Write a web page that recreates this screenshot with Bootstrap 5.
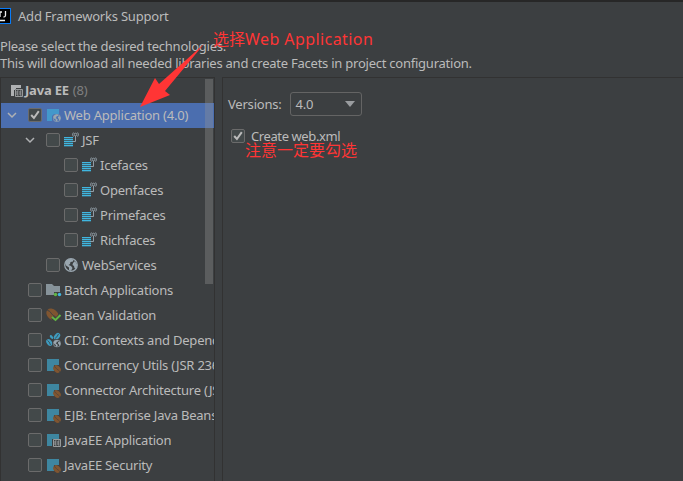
<!DOCTYPE html>
<html lang="en">
<head>
<meta charset="utf-8">
<title>Add Frameworks Support</title>
<link href="https://cdn.jsdelivr.net/npm/bootstrap@5.3.0/dist/css/bootstrap.min.css" rel="stylesheet">
<style>
body{width:683px;height:481px;background:#3c3f41;color:#bbb;font:13px/17px "Noto Sans","Noto Sans CJK SC",sans-serif;letter-spacing:-.21px}
.dialog{height:481px;border-top:2px solid #272727}
.titlebar{height:29px;padding-left:18px}
.logo{left:-5px;top:6px;width:16px;height:16px;background:#000;border:1px solid #087cfa}
.intro{height:46px;padding-top:7px;letter-spacing:-.24px}
.tree{width:215px;border:1px solid #323232;border-bottom:0}
.tree-row{height:25px;padding-left:27px}
.tree-row svg,.opt svg{flex:none;display:block}
.tree-row.head{padding-left:9px}
.tree-row.sel{background:#4b6eaf}
.tree-row.open{padding-left:6px}
.lv2{padding-left:45px}.lv2.open{padding-left:24px}.lv3{padding-left:63px}
.chev{width:10px;height:10px;margin:0 11px 1px 0;fill:none;stroke:#afb1b3;stroke-width:1.5}
.cb{flex:none;width:14px;height:14px;margin-bottom:1px;border:1px solid #6b6b6b;border-radius:2px;background:#43494a}
.cb svg{width:12px;height:12px;fill:none;stroke:#bbb;stroke-width:2}
.ico{width:16px;height:16px;margin:0 2px 1px 4px}
.tree-row.head .ico{margin:0 -1px 1px 0}
.count{color:#808080}
.thumb{right:1px;top:1px;width:8px;height:205px;background:rgba(150,150,150,.35)}
.detail{border:1px solid #323232;border-right:0;border-bottom:0;margin-left:7px;padding:14px 0 0 5px}
.combo{width:72px;height:24px;border:1px solid #646464;border-radius:3px;padding:0 6px 0 5px;margin-left:8px}
.opt{margin-top:12px;padding-left:3px}
.create{margin-left:6px;letter-spacing:-.4px}
.note{color:#ff3535;font:16px/20px "Noto Sans","Noto Sans CJK SC",sans-serif;white-space:nowrap;letter-spacing:0}
.note-a{left:213px;top:29px}.note-a span{letter-spacing:.42px}.note-b{left:245px;top:140px}
.arrow{left:130px;top:40px}
</style>
<script src="https://cdn.jsdelivr.net/npm/bootstrap@5.3.0/dist/js/bootstrap.bundle.min.js"></script>
</head>
<body class="overflow-hidden position-relative">
<svg width="0" height="0" class="position-absolute">
<symbol id="chev" viewBox="0 0 10 10"><path d="M1 3l4 4 4-4"/></symbol>
<symbol id="tick" viewBox="0 0 12 12"><path d="M2.2 6l2.7 3L9.8 2.2"/></symbol>
<symbol id="bean" viewBox="0 0 8 8"><ellipse cx="4" cy="4" rx="4.2" ry="3.2" transform="rotate(42 4 4)" fill="#805530"/><path d="M.8 1.4C3 2 3.2 3.6 4 4.2S6 5.200 7 7" stroke="#3c3f41" stroke-width=".6" fill="none"/></symbol>
<symbol id="globe" viewBox="0 0 14 14"><circle cx="7" cy="7" r="6.300" fill="none" stroke="#9aa7b0" stroke-width="1.200"/><path d="M1 5L2.500 2.500 6 .8 9.500 1.500 9 3.500 6.500 4 6 6 4.500 7 7 8 8.500 10 7 13 5 12 5 9.500 2 7.500ZM11 3L13.300 7 12 11 10.500 10 10 8 8.500 7 9 5Z" fill="#9aa7b0"/></symbol>
<symbol id="glb" viewBox="0 0 16 16"><use href="#globe" x="0" y="1" width="14" height="14"/></symbol>
<symbol id="jsf" viewBox="0 0 16 16"><path d="M0 5h9v10H0z" fill="#40b6e0" fill-opacity=".3"/><path d="M0 5h9v1H0zM0 7h9v1H0zM0 9h9v1H0zM0 11h9v1H0zM0 13h9v1H0z" fill="#40b6e0"/><path d="M8.500 9.500h3V4M9.400 .5Q7.600 2.500 9.400 4.600M13.600 .5Q15.400 2.500 13.600 4.600" fill="none" stroke="#9aa7b0" stroke-width=".9"/><circle cx="11.500" cy="2.500" r="1.300" fill="none" stroke="#9aa7b0" stroke-width=".9"/></symbol>
<symbol id="mod" viewBox="0 0 16 16"><path d="M1 2h12v6H8v6H1z" fill="#3e86a0"/><use href="#bean" x="7" y="8" width="8" height="8"/></symbol>
<symbol id="web" viewBox="0 0 16 16"><path d="M1 2h12v5H8L6 9v5H1z" fill="#4398cb"/><use href="#globe" x="6.800" y="7" width="8.200" height="8.200"/></symbol>
<symbol id="ee" viewBox="0 0 8 8"><path d="M0 0h8v8H0z" fill="#3c3f41"/><path d="M.5 .5h7v7h-7zM3.600 2H2v4h1.600M2 4h1.500M6.600 2H5v4h1.600M5 4h1.500" fill="none" stroke="#afb1b3" stroke-width=".8"/></symbol>
<symbol id="head" viewBox="0 0 16 16"><path d="M1 3h10v3H6v2H4v6H1z" fill="#afb1b3"/><use href="#ee" x="5" y="7" width="8" height="8"/></symbol>
<symbol id="app" viewBox="0 0 16 16"><path d="M1 2h12v5H6v7H1z" fill="#3e86a0"/><use href="#ee" x="7" y="7" width="8" height="8"/></symbol>
<symbol id="batch" viewBox="0 0 16 16"><path d="M0 2h6l2 2h6v6H8v3H0z" fill="#87939a"/><circle cx="9.500" cy="12.500" r="1.700" fill="#62b543"/><circle cx="13.500" cy="12.500" r="1.700" fill="#40b6e0"/></symbol>
<symbol id="valid" viewBox="0 0 16 16"><use href="#bean" x="0" y="1" width="13" height="13"/><path d="M6.500 10.500l3 3L14.500 8" fill="none" stroke="#3c3f41" stroke-width="4"/><path d="M6 10l3.500 3L14.500 8" fill="none" stroke="#62b543" stroke-width="2"/></symbol>
<symbol id="cdi" viewBox="0 0 16 16"><g fill="#3e9cc0"><ellipse cx="11" cy="4.300" rx="2.600" ry="3.800" transform="rotate(40 11 4.300)"/><ellipse cx="3.300" cy="10.500" rx="2.600" ry="3.800" transform="rotate(-35 3.300 10.500)"/><ellipse cx="5.500" cy="5" rx="1.300" ry="2.200" transform="rotate(-40 5.500 5)"/></g><path d="M9 6.500q2-1 3.500-4.500M1.500 8.500q2 1 3 4.500" stroke="#3c3f41" stroke-width=".8" fill="none"/><circle cx="11" cy="11.500" r="4.500" fill="#3c3f41"/><use href="#globe" x="7" y="7.500" width="8" height="8"/></symbol>
</svg>
<div class="dialog d-flex flex-column">
<div class="titlebar d-flex align-items-center position-relative"><svg class="logo position-absolute" viewBox="0 0 14 14"><path d="M2 3h4M4 3v5M9.500 2v4.500q0 1.500-2 1.500M4 11.500h5" fill="none" stroke="#eee" stroke-width="1.300"/></svg>Add Frameworks Support</div>
<div class="intro text-nowrap">Please select the desired technologies.<br>This will download all needed libraries and create Facets in project configuration.</div>
<div class="d-flex flex-fill">
<div class="tree position-relative overflow-hidden text-nowrap" id="tree">
<div class="tree-row head d-flex align-items-center"><svg class="ico"><use href="#head"/></svg><b>Java EE</b><span class="count ms-1">(8)</span></div>
<div class="thumb position-absolute"></div>
</div>
<div class="detail flex-fill">
<div class="d-flex align-items-center">Versions:<div class="combo d-flex align-items-center justify-content-between">4.0<svg width="10" height="6"><path d="M0 0h10L5 6z" fill="#9a9da0"/></svg></div></div>
<div class="opt d-flex align-items-center"><span class="cb"><svg><use href="#tick"/></svg></span><span class="create">Create web.xml</span></div>
</div>
</div>
</div>
<svg class="arrow position-absolute" width="75" height="68"><path d="M74 4L35 51 40 55 10 67 25 38 29 44Z" fill="#ff3535"/></svg>
<div class="note note-a position-absolute">选择<span>Web Application</span></div>
<div class="note note-b position-absolute">注意一定要勾选</div>
<script>
const rows=[['Web Application (4.0)','web','sel open',1],['JSF','jsf','lv2 open'],['Icefaces','jsf','lv3'],['Openfaces','jsf','lv3'],['Primefaces','jsf','lv3'],['Richfaces','jsf','lv3'],['WebServices','glb','lv2'],['Batch Applications','batch',''],['Bean Validation','valid',''],['CDI: Contexts and Dependency Injection','cdi',''],['Concurrency Utils (JSR 236)','mod',''],['Connector Architecture (JSR 322)','mod',''],['EJB: Enterprise Java Beans','mod',''],['JavaEE Application','app',''],['JavaEE Security','mod','']];
document.querySelector('.thumb').insertAdjacentHTML('beforebegin',rows.map(([t,i,c,on])=>`<div class="tree-row d-flex align-items-center ${c}">${c.includes('open')?'<svg class="chev"><use href="#chev"/></svg>':''}<span class="cb">${on?'<svg><use href="#tick"/></svg>':''}</span><svg class="ico"><use href="#${i}"/></svg><span>${t}</span></div>`).join(''));
</script>
</body>
</html>
